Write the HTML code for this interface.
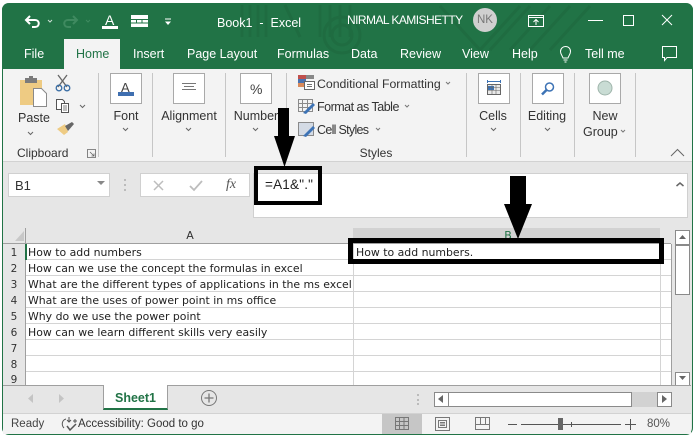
<!DOCTYPE html>
<html><head><meta charset="utf-8">
<style>
html,body{margin:0;padding:0;background:#fff}
#w{position:relative;width:697px;height:438px;overflow:hidden;background:#fff;font-family:"Liberation Sans",sans-serif}
#w div,#w span,#w svg{position:absolute}
.t{white-space:nowrap;line-height:16px;font-size:12.5px;color:#333}
.g{color:#fff;font-size:12.5px}
.c{font-family:"DejaVu Sans",sans-serif;font-size:10.9px;color:#222;left:28px}
.b{background:#fff;border:1px solid #a9a9a9;box-sizing:border-box;width:32px;height:31px;top:73px}
.s{background:#c6c6c6;width:1px;top:73px;height:84px}
.r{left:3px;width:22px;text-align:center;font-family:"DejaVu Sans",sans-serif;font-size:10.5px;color:#333}
.h{left:26px;width:645px;height:1px;background:#d4d4d4}
.ctr{text-align:center;transform:translateX(-50%)}
.k{background:#000}
</style></head><body>
<div id="w">
<div style="left:2px;top:3px;width:691px;height:432px;background:#e6e6e6;border:1px solid #217346;border-top:0;box-sizing:border-box;border-radius:7px"></div>
<div style="left:2px;top:3px;width:691px;height:66px;background:#217346;border-radius:7px 7px 0 0"></div>
<svg style="left:230px;top:3px" width="400" height="66" fill="none" stroke="#1f6c41" stroke-width="3">
<path d="M12 2V34M20 2V34M28 2V34M36 2V34M55 2L70 34M90 2V34M100 2V34M110 2V34M120 2V34"/>
<circle cx="112" cy="32" r="10"/><circle cx="112" cy="32" r="18"/>
<path d="M210 3L250 47L290 3M300 3L260 47M320 3L280 47M340 3L300 47M360 3L320 47"/>
</svg>

<!-- QAT -->
<svg style="left:24px;top:13px" width="150" height="20" fill="none" stroke="#fff">
<path d="M2 7H11C16 7 16 14 11 14H8M6 3L2 7L6 11" stroke-width="2"/>
<path d="M24 7L26 9L28 7" stroke-width="1" stroke="#cfe0d6"/>
<path d="M50 7H41C36 7 36 14 41 14H44M46 3L50 7L46 11" stroke-width="2" stroke="#3f8a60" transform="translate(3 0)"/>
<path d="M62 7L64 9L66 7" stroke-width="1" stroke="#3f8a60"/>
</svg>
<span class="t" style="left:105px;top:12px;font-size:14px;color:#fff">A</span>
<div style="left:102px;top:26px;width:16px;height:3px;background:#fff"></div>
<svg style="left:131px;top:15px" width="18" height="13"><rect x="0" y="0" width="17" height="12" fill="#fff"/><path d="M0 4.500H17M0 8H17M5.500 4V8M11 4V8" stroke="#217346"/></svg>
<svg style="left:164px;top:18px" width="9" height="9"><path d="M1 1H7" stroke="#fff"/><path d="M1 3.500H7L4 7Z" fill="#fff"/></svg>
<span class="t g" style="left:217px;top:15px">Book1 &nbsp;-&nbsp; Excel</span>
<span class="t g" style="left:347px;top:12px;font-size:12px;letter-spacing:-.55px">NIRMAL KAMISHETTY</span>
<div style="left:473px;top:8px;width:24px;height:24px;border-radius:50%;background:#d0d0d0"></div>
<span class="t" style="left:477px;top:12px;font-size:11.5px;color:#777">NK</span>
<svg style="left:525px;top:12px" width="165" height="16" fill="none" stroke="#fff">
<path d="M3.500 3.500H18.500V14.500H3.500ZM3.500 5.500H18.500M11 13V8M8.500 10L11 7.500L13.500 10"/>
<path d="M63 8.500H78"/>
<rect x="98.500" y="3.500" width="10" height="10"/>
<path d="M137 3L147 13M147 3L137 13"/>
</svg>

<!-- tabs -->
<div style="left:64px;top:39px;width:56px;height:31px;background:#f3f3f3"></div>
<span class="t g" style="left:24px;top:46px">File</span>
<span class="t" style="left:76px;top:46px;color:#217346">Home</span>
<span class="t g" style="left:133px;top:46px">Insert</span>
<span class="t g" style="left:187px;top:46px">Page Layout</span>
<span class="t g" style="left:277px;top:46px">Formulas</span>
<span class="t g" style="left:351px;top:46px">Data</span>
<span class="t g" style="left:400px;top:46px">Review</span>
<span class="t g" style="left:462px;top:46px">View</span>
<span class="t g" style="left:512px;top:46px">Help</span>
<svg style="left:558px;top:45px" width="16" height="20" fill="none" stroke="#fff"><path d="M5 13C4 10 2.500 9 2.500 6.500C2.500 3.500 5 1.500 7.500 1.500C10.500 1.500 12.500 3.500 12.500 6.500C12.500 9 11 10 10 13ZM5.500 15H9.500M6.500 17H8.500"/></svg>
<span class="t g" style="left:585px;top:46px">Tell me</span>
<svg style="left:661px;top:45px" width="18" height="18" fill="none" stroke="#fff"><path d="M1.500 1.500H15.500V12.500H6L3.500 15.500V12.500H1.500Z"/></svg>

<!-- ribbon -->
<div style="left:3px;top:69px;width:689px;height:92px;background:#f3f3f3;border-bottom:1px solid #d2d2d2"></div>
<div class="s" style="left:98px"></div><div class="s" style="left:152px"></div><div class="s" style="left:225px"></div><div class="s" style="left:286px"></div>
<div class="s" style="left:466px"></div><div class="s" style="left:520px"></div><div class="s" style="left:574px"></div><div class="s" style="left:635px"></div>

<!-- paste group -->
<svg style="left:18px;top:72px" width="60" height="66">
<path d="M2 8H24V17H15V33H2Z" fill="#eecb83"/>
<rect x="7" y="6" width="12" height="5" fill="#7b7b7b"/><rect x="11" y="4" width="4" height="3" fill="#7b7b7b"/>
<path d="M15.500 16.500H23.500L28.500 21.500V34.500H15.500Z" fill="#fff" stroke="#8a8a8a"/>
<path d="M40 3L49 15M49 3L40 15" stroke="#666" stroke-width="1.300"/>
<circle cx="41" cy="16" r="2.800" fill="none" stroke="#3a6ea5" stroke-width="1.300"/><circle cx="49" cy="16" r="2.800" fill="none" stroke="#3a6ea5" stroke-width="1.300"/>
<path d="M38.500 27.500H44.500L46.500 29.500V37.500H38.500Z" fill="#fff" stroke="#555"/>
<path d="M43.500 31.500H50.500V40.500H43.500Z" fill="#fff" stroke="#555"/><path d="M45 34H49M45 36H49M45 38H49" stroke="#555" stroke-width=".7"/>
<path d="M39 57L47 52L50 60L46 63Z" fill="#eecb83"/><path d="M47 54L54 50L56 52L50 59Z" fill="#666"/>
</svg>
<span class="t" style="left:18px;top:110px">Paste</span>
<span class="t" style="left:17px;top:145px;font-size:12px">Clipboard</span>
<svg style="left:27px;top:131px" width="10" height="6" fill="none" stroke="#666"><path d="M1 1L3.500 3.500L6 1"/></svg>
<svg style="left:79px;top:104px" width="8" height="6" fill="none" stroke="#666"><path d="M1 1L3.500 3.500L6 1"/></svg>
<svg style="left:87px;top:149px" width="9" height="9" fill="none" stroke="#666"><path d="M.5 .5H8.500V8.500H.5ZM3 3L7 7M7 4.500V7H4.500" stroke-width=".8"/></svg>

<!-- Font etc -->
<div class="b" style="left:110px"></div>
<span class="t" style="left:121px;top:80px;font-size:13px;color:#444">A</span>
<div style="left:118px;top:92px;width:16px;height:4px;background:#3f6fb0"></div>
<span class="t ctr" style="left:126px;top:108px">Font</span>
<svg style="left:122px;top:127px" width="8" height="6" fill="none" stroke="#666"><path d="M1 1L3.500 3.500L6 1"/></svg>

<div class="b" style="left:173px"></div>
<svg style="left:181px;top:83px" width="16" height="12" stroke="#777"><path d="M1 .5H15M3 3.500H13M1 6.500H15"/></svg>
<span class="t ctr" style="left:189px;top:108px">Alignment</span>
<svg style="left:185px;top:127px" width="8" height="6" fill="none" stroke="#666"><path d="M1 1L3.500 3.500L6 1"/></svg>

<div class="b" style="left:240px"></div>
<span class="t" style="left:250px;top:81px;font-size:14px;color:#444">%</span>
<span class="t ctr" style="left:256px;top:108px">Number</span>
<svg style="left:252px;top:127px" width="8" height="6" fill="none" stroke="#666"><path d="M1 1L3.500 3.500L6 1"/></svg>

<!-- styles -->
<svg style="left:297px;top:74px" width="20" height="66">
<rect x="1" y="1" width="8" height="4" fill="#c0504d"/><rect x="9" y="1" width="8" height="4" fill="#888"/><rect x="1" y="5" width="8" height="4" fill="#4a72b0"/><rect x="1" y="9" width="8" height="4" fill="#d98a5a"/>
<rect x="7.500" y="7.500" width="10" height="8" fill="#fff" stroke="#666"/><path d="M10 10.500H15M10 12.500H15" stroke="#444" stroke-width=".8"/>
<path d="M1.500 25.500H15.500V37.500H1.500ZM1.500 29.500H15.500M1.500 33.500H15.500M5.500 25.500V37.500M10.500 25.500V37.500" stroke="#8a8a8a" fill="#f3f3f3"/>
<path d="M6 39L16 29L18 31L9 40Z" fill="#3d73b5"/>
<rect x="1.500" y="48.500" width="15" height="13" fill="#d4dbe5" stroke="#8a8a8a"/>
<path d="M6 62L16 52L18 54L9 63Z" fill="#3d73b5"/>
</svg>
<span class="t" style="left:317px;top:76px;font-size:12.300px">Conditional Formatting</span>
<span class="t" style="left:317px;top:99px;letter-spacing:-.5px">Format as Table</span>
<span class="t" style="left:317px;top:122px;letter-spacing:-.7px">Cell Styles</span>
<svg style="left:445px;top:81px" width="7" height="5" fill="none" stroke="#777"><path d="M1 1L3 3L5 1"/></svg>
<svg style="left:404px;top:104px" width="7" height="5" fill="none" stroke="#777"><path d="M1 1L3 3L5 1"/></svg>
<svg style="left:375px;top:127px" width="7" height="5" fill="none" stroke="#777"><path d="M1 1L3 3L5 1"/></svg>
<span class="t ctr" style="left:376px;top:145px;font-size:12px">Styles</span>

<!-- Cells/Editing/New -->
<div class="b" style="left:478px"></div>
<svg style="left:485px;top:79px" width="18" height="18" fill="none" stroke="#666"><path d="M2.500 1V4M15.500 1V4M2.500 2.500H15.500" stroke="#3d73b5"/><rect x="2.500" y="5.500" width="13" height="10" fill="#e8e8e8"/><rect x="3" y="7" width="6" height="4" fill="#3d73b5" stroke="none"/><path d="M2.500 8.500H15.500M2.500 11.500H15.500M7 5.500V15.500M11 5.500V15.500" stroke-width=".6"/></svg>
<span class="t ctr" style="left:493px;top:108px">Cells</span>
<svg style="left:490px;top:127px" width="8" height="6" fill="none" stroke="#666"><path d="M1 1L3.500 3.500L6 1"/></svg>

<div class="b" style="left:532px"></div>
<svg style="left:539px;top:80px" width="18" height="18" fill="none"><circle cx="10.500" cy="7" r="4" stroke="#3d73b5" stroke-width="1.500"/><path d="M7.500 10L3 14.500" stroke="#3d73b5" stroke-width="2.500"/></svg>
<span class="t ctr" style="left:547px;top:108px">Editing</span>
<svg style="left:544px;top:127px" width="8" height="6" fill="none" stroke="#666"><path d="M1 1L3.500 3.500L6 1"/></svg>

<div class="b" style="left:589px"></div>
<svg style="left:595px;top:78px" width="20" height="20"><circle cx="10" cy="10" r="7" fill="#c9dcd4" stroke="#9fb5ab"/></svg>
<span class="t ctr" style="left:605px;top:108px">New</span>
<span class="t" style="left:583px;top:124px">Group</span>
<svg style="left:620px;top:129px" width="7" height="5" fill="none" stroke="#777"><path d="M1 1L3 3L5 1"/></svg>
<svg style="left:670px;top:148px" width="16" height="10" fill="none" stroke="#666"><path d="M1 8L7.500 1.500L14 8"/></svg>

<!-- formula bar -->
<div style="left:8px;top:173px;width:102px;height:24px;background:#fff;border:1px solid #d0d0d0;box-sizing:border-box"></div>
<span class="t" style="left:15px;top:178px;font-size:13px">B1</span>
<svg style="left:96px;top:181px" width="10" height="6"><path d="M1 0H9L5 4Z" fill="#888"/></svg>
<svg style="left:124px;top:178px" width="3" height="14" fill="#bbb"><rect width="2" height="2" y="1"/><rect width="2" height="2" y="6"/><rect width="2" height="2" y="11"/></svg>
<div style="left:140px;top:173px;width:110px;height:24px;background:#fff;border:1px solid #d0d0d0;box-sizing:border-box"></div>
<svg style="left:152px;top:178px" width="14" height="14" stroke="#bdbdbd" stroke-width="1.500"><path d="M2 3L11 12M11 3L2 12"/></svg>
<svg style="left:188px;top:178px" width="16" height="14" fill="none" stroke="#bdbdbd" stroke-width="1.800"><path d="M2 8L6 12L14 3"/></svg>
<span class="t" style="left:226px;top:177px;font-family:'Liberation Serif',serif;font-style:italic;font-size:14px;color:#555">fx</span>
<div style="left:253px;top:173px;width:435px;height:45px;background:#fff;border:1px solid #d0d0d0;box-sizing:border-box"></div>
<span class="t" style="left:265px;top:177px;font-size:13.500px;color:#222;letter-spacing:.2px">=A1&amp;"."</span>
<svg style="left:675px;top:181px" width="10" height="7" fill="none" stroke="#666" stroke-width="1.500"><path d="M1.500 5L5 2L8.500 5"/></svg>

<!-- sheet -->
<div style="left:3px;top:228px;width:668px;height:15px;background:#e6e6e6"></div>
<div style="left:3px;top:243px;width:22px;height:142px;background:#e6e6e6"></div>
<div style="left:25px;top:243px;width:646px;height:142px;background:#fff"></div>
<div style="left:353px;top:228px;width:307px;height:15px;background:#d2d2d2"></div>
<div style="left:3px;top:243px;width:668px;height:1px;background:#9f9f9f"></div>
<div style="left:25px;top:228px;width:1px;height:157px;background:#9f9f9f"></div>
<svg style="left:15px;top:231px" width="9" height="10"><path d="M9 0V10H0Z" fill="#c8c8c8"/></svg>
<span class="t ctr" style="left:190px;top:228px;font-size:11px;font-family:'DejaVu Sans',sans-serif">A</span>
<span class="t ctr" style="left:508px;top:228px;font-size:11px;color:#217346;font-family:'DejaVu Sans',sans-serif">B</span>
<div style="left:353px;top:244px;width:1px;height:141px;background:#d4d4d4"></div>
<div style="left:660px;top:244px;width:1px;height:141px;background:#d4d4d4"></div>
<div style="left:671px;top:244px;width:1px;height:141px;background:#9f9f9f"></div>
<div class="h" style="top:259px"></div><div class="h" style="top:275px"></div><div class="h" style="top:291px"></div><div class="h" style="top:307px"></div><div class="h" style="top:323px"></div><div class="h" style="top:339px"></div><div class="h" style="top:355px"></div><div class="h" style="top:371px"></div>
<div style="left:25px;top:244px;width:2px;height:16px;background:#217346"></div>
<span class="t r" style="top:245px">1</span><span class="t r" style="top:261px">2</span><span class="t r" style="top:277px">3</span><span class="t r" style="top:293px">4</span><span class="t r" style="top:309px">5</span><span class="t r" style="top:325px">6</span><span class="t r" style="top:341px">7</span><span class="t r" style="top:357px">8</span><span class="t r" style="top:372px">9</span>
<span class="t c" style="top:245px">How to add numbers</span>
<span class="t c" style="top:261px">How can we use the concept the formulas in excel</span>
<span class="t c" style="top:277px;width:325px;overflow:hidden">What are the different types of applications in the ms excel</span>
<span class="t c" style="top:293px">What are the uses of power point in ms office</span>
<span class="t c" style="top:309px">Why do we use the power point</span>
<span class="t c" style="top:325px">How can we learn different skills very easily</span>
<span class="t c" style="top:245px;left:356px">How to add numbers.</span>

<!-- vertical scroll -->
<div style="left:675px;top:230px;width:15px;height:15px;background:#fff;border:1px solid #8a8a8a;box-sizing:border-box"></div>
<svg style="left:678px;top:235px" width="10" height="5"><path d="M1 4H8L4.500 0Z" fill="#666"/></svg>
<div style="left:675px;top:245px;width:15px;height:50px;background:#fff;border:1px solid #8a8a8a;box-sizing:border-box"></div>
<div style="left:675px;top:372px;width:15px;height:14px;background:#fff;border:1px solid #8a8a8a;box-sizing:border-box"></div>
<svg style="left:678px;top:376px" width="10" height="5"><path d="M1 0H8L4.500 4Z" fill="#666"/></svg>

<!-- sheet tabs row -->
<div style="left:3px;top:385px;width:688px;height:1px;background:#9f9f9f"></div>
<svg style="left:28px;top:394px" width="36" height="10" fill="#c4c4c4"><path d="M5 0V9L0 4.500Z"/><path d="M31 0V9L36 4.500Z"/></svg>
<div style="left:103px;top:385px;width:65px;height:25px;background:#fff;border-left:1px solid #9f9f9f;border-right:1px solid #9f9f9f;border-bottom:2px solid #217346;box-sizing:border-box"></div>
<span class="t" style="left:115px;top:390px;font-weight:bold;color:#217346;font-size:12.500px">Sheet1</span>
<svg style="left:200px;top:389px" width="18" height="18" fill="none" stroke="#777"><circle cx="9" cy="9" r="7.500"/><path d="M9 4.500V13.500M4.500 9H13.500" stroke-width="1.300"/></svg>
<svg style="left:417px;top:394px" width="3" height="12" fill="#bbb"><rect width="2" height="2" y="0"/><rect width="2" height="2" y="5"/><rect width="2" height="2" y="9"/></svg>
<div style="left:434px;top:392px;width:15px;height:15px;background:#fff;border:1px solid #8a8a8a;box-sizing:border-box"></div>
<svg style="left:438px;top:395px" width="7" height="9"><path d="M5 0V8L0 4Z" fill="#666"/></svg>
<div style="left:448px;top:392px;width:184px;height:15px;background:#fff;border:1px solid #8a8a8a;box-sizing:border-box"></div>
<div style="left:632px;top:392px;width:25px;height:15px;background:#d2d2d2"></div>
<div style="left:657px;top:392px;width:15px;height:15px;background:#fff;border:1px solid #8a8a8a;box-sizing:border-box"></div>
<svg style="left:662px;top:395px" width="7" height="9"><path d="M0 0V8L5 4Z" fill="#666"/></svg>

<!-- status -->
<div style="left:3px;top:413px;width:688px;height:21px;background:#f3f3f3;border-top:1px solid #d2d2d2;box-sizing:border-box"></div>
<span class="t" style="left:11px;top:416px;font-size:11.500px;color:#444">Ready</span>
<svg style="left:60px;top:416px" width="18" height="16" fill="none" stroke="#555"><path d="M6 3C2 4 1 9 4 12M9 1V6M7 4L9 6L11 4M13 5H17M15 3V7" stroke-width="1"/><path d="M7 10L10 14L16 8" stroke-width="1.500"/></svg>
<span class="t" style="left:78px;top:416px;font-size:11.500px;color:#333">Accessibility: Good to go</span>
<div style="left:382px;top:414px;width:40px;height:20px;background:#c6c6c6"></div>
<svg style="left:393px;top:417px" width="18" height="14" fill="none" stroke="#777"><path d="M2.500 .5H15.500V12.500H2.500ZM2.500 4.500H15.500M2.500 8.500H15.500M6.500 .5V12.500M11 .5V12.500"/></svg>
<svg style="left:434px;top:417px" width="18" height="14" fill="none" stroke="#777"><path d="M1.500 .5H15.500V13.500H1.500ZM4.500 3.500H12.500V10.500H4.500ZM6 5.500H11M6 7H11M6 8.500H11"/></svg>
<svg style="left:474px;top:417px" width="18" height="14" fill="none" stroke="#777"><path d="M1.500 .5H15.500V12.500H1.500ZM6.500 .5V7.500H11.500V.5M1.500 7.500H6.500M11.500 7.500H15.500"/></svg>
<div style="left:508px;top:424px;width:9px;height:1px;background:#555"></div>
<div style="left:521px;top:424px;width:100px;height:1px;background:#555"></div>
<div style="left:558px;top:418px;width:5px;height:12px;background:#666"></div>
<div style="left:571px;top:422px;width:1px;height:5px;background:#555"></div>
<svg style="left:625px;top:418px" width="12" height="12" stroke="#555"><path d="M0 6.500H11M5.500 1V12"/></svg>
<span class="t" style="left:647px;top:416px;font-size:11.500px;color:#555">80%</span>

<!-- annotations -->
<div class="k" style="left:278px;top:108px;width:11px;height:30px"></div>
<svg style="left:274px;top:136px" width="22" height="31"><path d="M0 0H21L10.500 31Z" fill="#000"/></svg>
<div style="left:254px;top:166px;width:68px;height:39px;border:4px solid #000;box-sizing:border-box"></div>
<div class="k" style="left:510px;top:176px;width:16px;height:31px"></div>
<svg style="left:504px;top:204px" width="28" height="36"><path d="M0 0H28L14 35Z" fill="#000"/></svg>
<div style="left:348px;top:238px;width:316px;height:26px;border:5px solid #000;box-sizing:border-box"></div>
</div>
</body></html>
